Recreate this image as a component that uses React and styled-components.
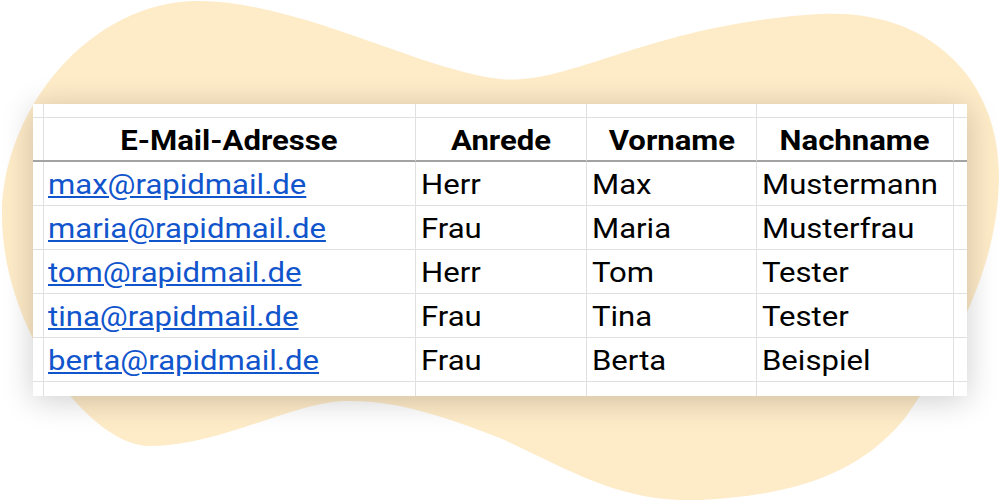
import styled, { createGlobalStyle } from "styled-components";

const GlobalStyle = createGlobalStyle`
  html, body {
    margin: 0;
    padding: 0;
    background: #ffffff;
  }
  body {
    font-family: Roboto, "Liberation Sans", Arial, sans-serif;
  }
`;

const COLUMNS = ["E-Mail-Adresse", "Anrede", "Vorname", "Nachname"];

const ROWS = [
  ["max@rapidmail.de", "Herr", "Max", "Mustermann"],
  ["maria@rapidmail.de", "Frau", "Maria", "Musterfrau"],
  ["tom@rapidmail.de", "Herr", "Tom", "Tester"],
  ["tina@rapidmail.de", "Frau", "Tina", "Tester"],
  ["berta@rapidmail.de", "Frau", "Berta", "Beispiel"],
];

function Blob() {
  return (
    <BlobSvg viewBox="0 0 1000 500" preserveAspectRatio="none">
      <path
        d="M 2 215
           C 2 110, 90 0, 200 1
           C 300 2, 420 70, 500 79
           C 570 86, 650 24, 820 14
           C 930 8, 999 80, 999 175
           C 999 260, 960 340, 905 418
           C 855 480, 780 496, 700 500
           C 620 503, 570 470, 500 438
           C 440 415, 395 400, 345 401
           C 290 403, 220 446, 150 446
           C 90 446, 2 330, 2 215 Z"
        fill="#feebc8"
      />
    </BlobSvg>
  );
}

function App() {
  return (
    <>
      <GlobalStyle />
      <Stage>
        <Blob />
        <Sheet>
          {[0, 1, 2, 3, 4, 5].map((c) => (
            <Cell key={"top" + c} $col={c} $kind="edge" />
          ))}

          <Cell $col={0} $kind="head" />
          {COLUMNS.map((title, i) => (
            <Cell key={title} $col={i + 1} $kind="head">
              <HeadText>{title}</HeadText>
            </Cell>
          ))}
          <Cell $col={5} $kind="head" />

          {ROWS.map((row) => (
            <Row key={row[0]}>
              <Cell $col={0} />
              <Cell $col={1}>
                <MailLink href={"mailto:" + row[0]}>{row[0]}</MailLink>
              </Cell>
              <Cell $col={2}>
                <Value>{row[1]}</Value>
              </Cell>
              <Cell $col={3}>
                <Value>{row[2]}</Value>
              </Cell>
              <Cell $col={4}>
                <Value>{row[3]}</Value>
              </Cell>
              <Cell $col={5} />
            </Row>
          ))}

          {[0, 1, 2, 3, 4, 5].map((c) => (
            <Cell key={"bottom" + c} $col={c} $kind="last" />
          ))}
        </Sheet>
      </Stage>
    </>
  );
}

export default App;

const Stage = styled.div`
  position: relative;
  width: 1000px;
  height: 500px;
  box-sizing: border-box;
  padding: 104px 33px 0 33px;
  overflow: hidden;
`;

const BlobSvg = styled.svg`
  position: absolute;
  left: 0;
  top: 0;
  width: 1000px;
  height: 500px;
  z-index: 0;
`;

const Sheet = styled.div`
  position: relative;
  z-index: 1;
  display: grid;
  grid-template-columns: 10px 373px 171px 170px 197px 13px;
  grid-template-rows: 14px 44px repeat(5, 44px) 14px;
  width: 934px;
  height: 292px;
  background: #ffffff;
  box-shadow: 0 4px 30px rgba(0, 0, 0, 0.2);
`;

const Row = styled.div`
  display: contents;
`;

const Cell = styled.div`
  box-sizing: border-box;
  display: flex;
  align-items: center;
  justify-content: ${(p) => (p.$kind === "head" ? "center" : "flex-start")};
  padding: 3px 5px 0;
  overflow: hidden;
  white-space: nowrap;
  color: #000000;
  border-right: ${(p) => (p.$col === 5 ? "none" : "1px solid #e0e0e0")};
  border-bottom: ${(p) =>
    p.$kind === "last"
      ? "none"
      : p.$kind === "head"
      ? "2px solid #a3a3a3"
      : "1px solid #e0e0e0"};
`;

const Value = styled.span`
  display: inline-block;
  font-size: 28px;
  line-height: 1;
  color: #000000;
  transform: scaleX(1.11);
  transform-origin: left center;
`;

const HeadText = styled.span`
  display: inline-block;
  font-weight: 700;
  font-size: 28px;
  line-height: 1;
  color: #000000;
  transform: scaleX(1.11);
  transform-origin: center center;
`;

const MailLink = styled.a`
  display: inline-block;
  color: #1155cc;
  text-decoration: underline;
  text-underline-offset: 2px;
  font-size: 28px;
  line-height: 1;
  transform: scaleX(1.11);
  transform-origin: left center;
`;
